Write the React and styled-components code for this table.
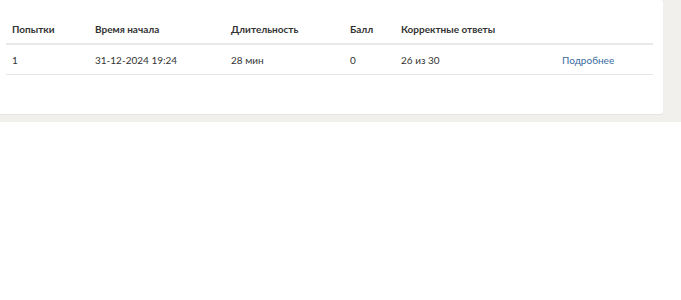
import React from "react";
import styled, { createGlobalStyle } from "styled-components";

const GlobalStyle = createGlobalStyle`
  html, body {
    margin: 0;
    padding: 0;
    background: #ffffff;
    font-family: Lato, "Open Sans", sans-serif;
  }
`;

const Backdrop = styled.section`
  background: #f1f0ed;
  height: 122px;
  padding-right: 18px;
  box-sizing: border-box;
`;

const Card = styled.div`
  background: #ffffff;
  height: 114px;
  border-radius: 0 3px 3px 0;
  box-shadow: 0 1px 1px rgba(0, 0, 0, 0.06);
  padding: 15px 10px 0 6px;
  box-sizing: border-box;
`;

const Table = styled.table`
  width: 100%;
  border-collapse: collapse;
  table-layout: fixed;
  font-size: 10px;
  color: #333333;
`;

const Head = styled.th`
  text-align: left;
  font-weight: 700;
  padding: 0 6px;
  height: 28px;
  border-bottom: 2px solid #e9e9e9;
`;

const Cell = styled.td`
  padding: 0 6px;
  height: 29px;
  border-bottom: 1px solid #e6e6e6;
`;

const MoreLink = styled.a`
  color: #3a6c9f;
  text-decoration: none;
  cursor: pointer;
`;

const columns = [
  { title: "Попытки", width: 83 },
  { title: "Время начала", width: 136 },
  { title: "Длительность", width: 119 },
  { title: "Балл", width: 51 },
  { title: "Корректные ответы", width: 161 },
  { title: "", width: 97 },
];

const attempts = [
  { n: 1, start: "31-12-2024 19:24", duration: "28 мин", score: 0, correct: "26 из 30" },
];

const App = () => {
  return (
    <>
      <GlobalStyle />
      <Backdrop>
        <Card>
          <Table>
            <colgroup>
              {columns.map((c, i) => (
                <col key={i} style={{ width: c.width }} />
              ))}
            </colgroup>
            <thead>
              <tr>
                {columns.map((c, i) => (
                  <Head key={i}>{c.title}</Head>
                ))}
              </tr>
            </thead>
            <tbody>
              {attempts.map((a) => (
                <tr key={a.n}>
                  <Cell>{a.n}</Cell>
                  <Cell>{a.start}</Cell>
                  <Cell>{a.duration}</Cell>
                  <Cell>{a.score}</Cell>
                  <Cell>{a.correct}</Cell>
                  <Cell>
                    <MoreLink>Подробнее</MoreLink>
                  </Cell>
                </tr>
              ))}
            </tbody>
          </Table>
        </Card>
      </Backdrop>
    </>
  );
};

export default App;
